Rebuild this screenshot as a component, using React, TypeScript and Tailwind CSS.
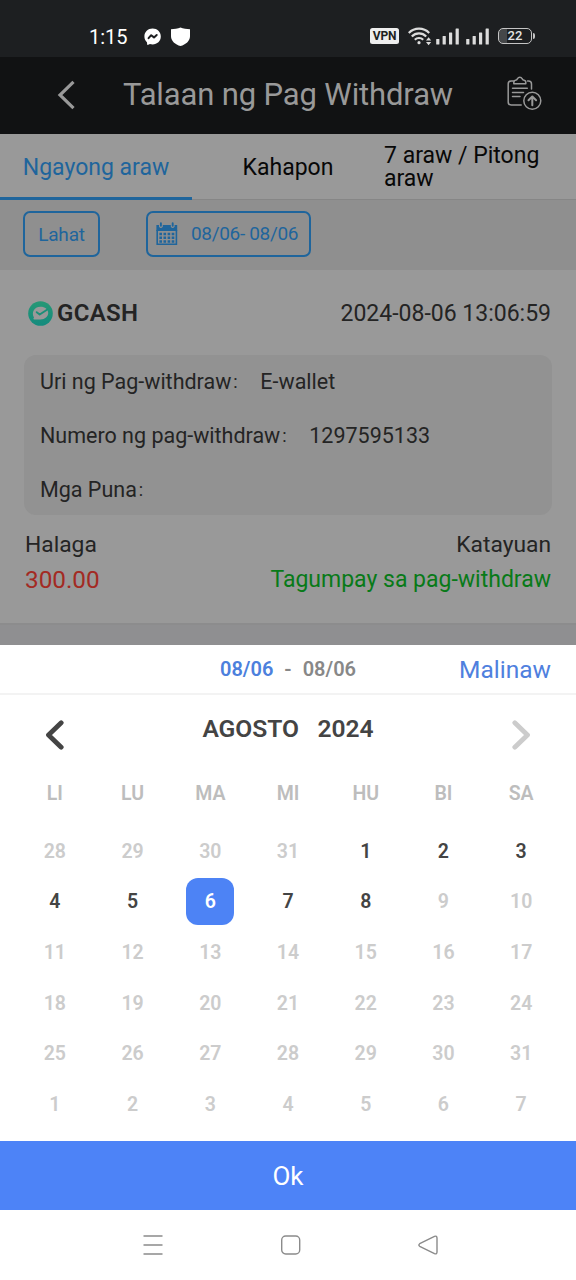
import React from "react";

const weekdays = ["LI", "LU", "MA", "MI", "HU", "BI", "SA"];
const days = [
  28, 29, 30, 31, 1, 2, 3,
  4, 5, 6, 7, 8, 9, 10,
  11, 12, 13, 14, 15, 16, 17,
  18, 19, 20, 21, 22, 23, 24,
  25, 26, 27, 28, 29, 30, 31,
  1, 2, 3, 4, 5, 6, 7,
];
const firstEnabled = 4;
const lastEnabled = 11;
const selected = 9;

function Signal() {
  return (
    <svg width="24" height="17" viewBox="0 0 24 17" fill="#dcdcdc">
      <rect x="0.2" y="11" width="3.2" height="5.6" rx="0.5" />
      <rect x="6.6" y="8" width="3.2" height="8.6" rx="0.5" />
      <rect x="13" y="4.6" width="3.2" height="12" rx="0.5" />
      <rect x="19.6" y="0.4" width="3.2" height="16.2" rx="0.5" />
    </svg>
  );
}

function StatusBar() {
  return (
    <div className="flex h-[57px] items-start bg-[#1d1f21] pt-[26px] text-white">
      <span className="ml-[89px] w-[55px] text-[20px] leading-[22px]">1:15</span>
      <svg className="mt-[2px]" width="18" height="18" viewBox="0 0 18 18">
        <path fill="#fff" d="M8.600.6C4 .6.4 4 .4 8.500c0 2.300 1 4.300 2.500 5.700.3.500.1 2.200.4 2.600.5.500 2-.6 2.600-.7.900.2 1.700.3 2.700.3 4.600 0 8.200-3.400 8.200-7.900S13.200.6 8.600.6Z" />
        <path fill="none" stroke="#1d1f21" strokeWidth="2" strokeLinecap="round" strokeLinejoin="round" d="M4.600 10.200 7.200 7.200 10 9.400 12.700 7" />
      </svg>
      <svg className="ml-[9px] mt-px" width="19" height="20" viewBox="0 0 19 20">
        <path fill="#fff" d="M9.500 0.500C12 1.400 16 2.200 19 2.200v7c0 4.800-4.300 8.300-9.500 9.900C4.300 17.500 0 14 0 9.200v-7C3 2.200 7 1.400 9.500 0.500Z" />
      </svg>
      <span className="ml-[180px] mt-[2px] flex h-[16px] w-[29px] items-center justify-center rounded-[2.500px] bg-[#eee] text-[12px] leading-[16px] font-bold tracking-[-0.200px] text-[#1d1f21]">VPN</span>
      <svg className="ml-[9px] mt-px" width="24" height="19" viewBox="0 0 24 19" fill="none" stroke="#dcdcdc" strokeWidth="2.200">
        <path d="M.8 6a14.300 14.300 0 0 1 20.400 0M3.800 9.400a10 10 0 0 1 14.400 0M6.800 12.700a6 6 0 0 1 8.400 0" />
        <circle cx="11" cy="15.700" r="1.600" fill="#dcdcdc" stroke="none" />
        <path fill="#dcdcdc" stroke="none" d="m18 13.400 2.600-3.200 2.600 3.200zM18 15l2.600 3.200 2.600-3.200z" />
      </svg>
      <div className="ml-[4px] mt-[2px]"><Signal /></div>
      <div className="ml-[6px] mt-[2px]"><Signal /></div>
      <div className="ml-[8px] mt-[2px] flex items-center">
        <div className="flex h-[16px] w-[34px] items-center justify-center rounded-[5px] border-[1.500px] border-[#c4c4c4] bg-linear-to-r from-[#454749] from-[26%] to-[#1d1f21] to-[26%] text-[13px] leading-[14px] font-medium text-[#e4e4e4]">22</div>
        <div className="ml-px h-[6px] w-[1.500px] rounded-r bg-[#c4c4c4]" />
      </div>
    </div>
  );
}

function Header() {
  return (
    <header className="flex h-[77px] items-center bg-[#111213]">
      <svg className="ml-[56px] mt-[-2px]" width="20" height="30" viewBox="0 0 20 30" fill="none" stroke="#999" strokeWidth="3.200">
        <path d="M17.500 1.800 4 15 17.500 28.200" />
      </svg>
      <h1 className="ml-[47px] mt-[-1px] w-[384px] whitespace-nowrap text-[31px] leading-[40px] tracking-[-0.140px] text-[#999]">Talaan ng Pag Withdraw</h1>
      <svg className="mt-[-5px]" width="35" height="35" viewBox="0 0 35 35" fill="none" stroke="#999" strokeWidth="1.500" strokeLinecap="round" strokeLinejoin="round">
        <path d="M6.500 5H4.200A3 3 0 0 0 1.200 8v18a3 3 0 0 0 3 3h10M20.500 5h1a3 3 0 0 1 3 3v5" />
        <path d="M6.800 7.800V6.500c0-1.500 1.200-2.200 2.400-2.400.7-.2.900-.600 1.300-1.400A2.600 2.600 0 0 1 12.800 1.200c1.100 0 1.900.600 2.300 1.500.4.800.600 1.200 1.300 1.400 1.200.2 2.400.9 2.400 2.400v1.300z" />
        <path d="M5.500 12.300h14.800M5.500 16.400h11M5.500 20.500h7.500" />
        <circle cx="25.300" cy="24.800" r="8.500" />
        <path strokeWidth="2" d="M25.300 29.300v-8.500M21.500 24.300l3.800-3.800 3.800 3.800" />
      </svg>
    </header>
  );
}

function CalendarIcon() {
  return (
    <svg width="22" height="24" viewBox="0 0 22 24">
      <path fill="none" stroke="#1f659c" strokeWidth="1.600" d="M1.200 8v14.200h19.200V8" />
      <path fill="#1f659c" d="M.4 3h2.600v1.800q1.800 2.400 3.800 0V3h8v1.800q1.800 2.400 3.800 0V3h2.600V9H.4z" />
      <path fill="none" stroke="#1f659c" strokeWidth="1.900" strokeLinecap="round" d="M4.900 1.200v2.600M16.700 1.200v2.600" />
      <path fill="none" stroke="#1f659c" strokeWidth="2.600" strokeDasharray="2.600 1.500" d="M3.400 12h15M3.400 15.800h15M3.400 19.500h15" />
    </svg>
  );
}

function InfoRow({ label, value }: { label: string; value?: string }) {
  return (
    <div className="flex h-[54px] items-center text-[21.500px] leading-[26px] text-[#242424]">
      <span>{label}</span>
      <span className="ml-[2px] w-[27px] text-[18px]">:</span>
      <span>{value}</span>
    </div>
  );
}

function Records() {
  return (
    <main>
      <nav className="flex h-[66px] border-b border-[#868686] bg-[#999] text-[23px] leading-[23px] text-[#080808]">
        <div className="flex h-[66px] w-[192px] items-center justify-center border-b-[3px] border-[#1f659c] pt-[3px] text-[#1f659c]">Ngayong araw</div>
        <div className="flex w-[192px] items-center justify-center pt-[2px]">Kahapon</div>
        <div className="flex w-[192px] items-center">7 araw / Pitong<br />araw</div>
      </nav>
      <div className="flex h-[70px] items-start bg-[#8f8f8f] pt-[11px] text-[#1f659c]">
        <button className="ml-[23px] h-[46px] w-[77px] rounded-[7px] border-2 border-[#1f659c] pt-[2px] text-[19px] tracking-[-0.200px]">Lahat</button>
        <button className="ml-[46px] flex h-[46px] w-[165px] items-center rounded-[7px] border-2 border-[#1f659c] pl-[8px] text-[19px]">
          <CalendarIcon />
          <span className="ml-[13px] whitespace-nowrap tracking-[-0.330px]">08/06- 08/06</span>
        </button>
      </div>
      <section className="h-[355px] border-b-2 border-[#8c8c8d] bg-[#999] px-[24px] text-[#242424]">
        <div className="flex h-[86px] items-center">
          <svg className="ml-[4px]" width="25" height="25" viewBox="0 0 25 25">
            <defs>
              <linearGradient id="wallet" x1="0" y1="0" x2="0" y2="1">
                <stop offset="0" stopColor="#269875" />
                <stop offset="1" stopColor="#148b7e" />
              </linearGradient>
            </defs>
            <circle cx="12.500" cy="12.500" r="12.300" fill="url(#wallet)" />
            <path fill="#999" d="M12.500 5.800c4.600 0 7.700 2.600 7.700 6.200s-3.200 6.400-7.700 6.400H6.200c-1 0-1-.900-.2-1.900-2.700-4.500-.3-10.700 6.500-10.700Z" />
            <path fill="none" stroke="#1b8f78" strokeWidth="1.900" strokeLinecap="round" strokeLinejoin="round" d="m8.700 11.200 3 2.300 7.300-4.800" />
          </svg>
          <b className="ml-[4px] text-[24px] leading-[28px] font-semibold tracking-[0.300px]">GCASH</b>
          <time className="ml-auto pt-[2px] pr-px text-[23px] leading-[28px]">2024-08-06 13:06:59</time>
        </div>
        <div className="h-[160px] rounded-[12px] bg-[#929292] pl-[16px]">
          <div className="-mt-px">
            <InfoRow label="Uri ng Pag-withdraw" value="E-wallet" />
            <InfoRow label="Numero ng pag-withdraw" value="1297595133" />
            <InfoRow label="Mga Puna" />
          </div>
        </div>
        <div className="flex items-center justify-between px-px pt-[14px] text-[22.800px] leading-[32px]">
          <span>Halaga</span>
          <span>Katayuan</span>
        </div>
        <div className="flex items-center justify-between px-px text-[23px] leading-[36px]">
          <span className="text-[24.300px] text-[#a32a23]">300.00</span>
          <span className="pt-px text-[#087a18]">Tagumpay sa pag-withdraw</span>
        </div>
      </section>
      <div className="h-[20px] bg-[#8f8f91]" />
    </main>
  );
}

function DatePicker() {
  return (
    <section className="bg-white">
      <div className="grid h-[50px] grid-cols-[192px_192px_192px] items-center border-b-2 border-[#f3f3f3]">
        <span />
        <div className="flex justify-center gap-[11px] text-[20px] leading-[24px] font-semibold text-[#888]">
          <span className="text-[#4c80dd]">08/06</span>
          <span>-</span>
          <span>08/06</span>
        </div>
        <span className="pt-px pr-[25px] text-right text-[24.500px] leading-[30px] text-[#4f80de]">Malinaw</span>
      </div>
      <div className="flex h-[66px] items-center justify-between px-[45px] pt-[2px]">
        <svg className="mt-[11px]" width="20" height="30" viewBox="0 0 20 30" fill="none" stroke="#444" strokeWidth="4.800" strokeLinecap="round" strokeLinejoin="round">
          <path d="M16.200 2.800 3.500 15l12.700 12.200" />
        </svg>
        <h2 className="text-[24.600px] leading-[28px] font-semibold whitespace-pre text-[#444]">AGOSTO   2024</h2>
        <svg className="mt-[11px]" width="20" height="30" viewBox="0 0 20 30" fill="none" stroke="#ccc" strokeWidth="4.800" strokeLinecap="round" strokeLinejoin="round">
          <path d="M3.800 2.800 16.500 15 3.800 27.200" />
        </svg>
      </div>
      <div className="grid h-[65px] grid-cols-7 items-center px-[16px] text-center text-[19.500px] font-semibold text-[#bdbdbd]">
        {weekdays.map((d) => <span key={d}>{d}</span>)}
      </div>
      <div className="grid h-[304px] grid-cols-7 grid-rows-6 px-[16px] text-[19.500px] font-semibold">
        {days.map((d, i) => (
          <div key={i} className="flex items-center justify-center">
            <span
              className={
                i === selected
                  ? "flex h-[47px] w-[48px] items-center justify-center rounded-[12px] bg-[#4d83f5] text-white"
                  : i >= firstEnabled && i <= lastEnabled
                    ? "text-[#444]"
                    : "text-[#ccc]"
              }
            >
              {d}
            </span>
          </div>
        ))}
      </div>
      <button className="mt-[11px] block h-[69px] w-full bg-[#4d83f7] pt-px text-[26px] text-white">Ok</button>
    </section>
  );
}

function NavigationBar() {
  return (
    <footer className="flex h-[70px] items-center bg-white pl-[142px]">
      <svg width="22" height="22" viewBox="0 0 22 22" fill="none" stroke="#8b8b8b" strokeWidth="1.500">
        <path d="M1.500 2h19M1.500 11h19M1.500 20h19" />
      </svg>
      <svg className="ml-[116px]" width="22" height="22" viewBox="0 0 22 22" fill="none" stroke="#8b8b8b" strokeWidth="1.400">
        <rect x="1.700" y="2" width="18" height="18" rx="4" />
      </svg>
      <svg className="ml-[116px]" width="22" height="22" viewBox="0 0 22 22" fill="none" stroke="#8b8b8b" strokeWidth="1.400" strokeLinejoin="round">
        <path d="M1.700 9.700 16.500 2.300Q19 1.500 19 4v14q0 2.500-2.500 1.700L1.700 12.300Q0 11 1.700 9.700Z" />
      </svg>
    </footer>
  );
}

export default function App() {
  return (
    <div className="h-[1280px] w-[576px] overflow-hidden bg-white font-[Roboto,sans-serif]">
      <StatusBar />
      <Header />
      <Records />
      <DatePicker />
      <NavigationBar />
    </div>
  );
}
